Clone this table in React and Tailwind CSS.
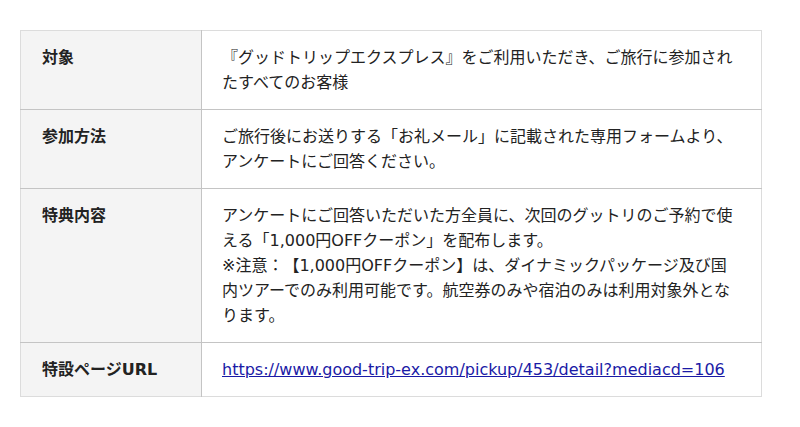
const rows = [
  {
    label: "対象",
    body: ["『グッドトリップエクスプレス』をご利用いただき、ご旅行に参加されたすべてのお客様"],
  },
  {
    label: "参加方法",
    body: ["ご旅行後にお送りする「お礼メール」に記載された専用フォームより、アンケートにご回答ください。"],
  },
  {
    label: "特典内容",
    body: [
      "アンケートにご回答いただいた方全員に、次回のグットリのご予約で使える「1,000円OFFクーポン」を配布します。",
      "※注意：【1,000円OFFクーポン】は、ダイナミックパッケージ及び国内ツアーでのみ利用可能です。航空券のみや宿泊のみは利用対象外となります。",
    ],
  },
];

const url = "https://www.good-trip-ex.com/pickup/453/detail?mediacd=106";

export default function App() {
  return (
    <div className="min-h-screen bg-white px-5 pt-[30px] font-['DejaVu_Sans','Noto_Sans_CJK_JP',sans-serif] text-[16px] leading-[25px] text-[#222] [text-spacing-trim:space-all]">
      <table className="w-[742px] border-collapse border border-[#dcdcdc]">
        <tbody>
          {rows.map((row) => (
            <tr key={row.label} className="border-b border-[#c4c4c4]">
              <th className="w-[181px] border-r border-[#c4c4c4] bg-[#f4f4f4] px-[21px] py-[14px] text-left align-top font-bold">
                {row.label}
              </th>
              <td className="px-5 py-[14px] align-top">
                {row.body.map((line) => (
                  <p key={line}>{line}</p>
                ))}
              </td>
            </tr>
          ))}
          <tr>
            <th className="w-[181px] border-r border-[#c4c4c4] bg-[#f4f4f4] px-[21px] py-[14px] text-left align-top font-bold">
              特設ページURL
            </th>
            <td className="px-5 py-[14px] align-top">
              <a href={url} className="text-[#1a1aa6] underline">
                {url}
              </a>
            </td>
          </tr>
        </tbody>
      </table>
    </div>
  );
}
